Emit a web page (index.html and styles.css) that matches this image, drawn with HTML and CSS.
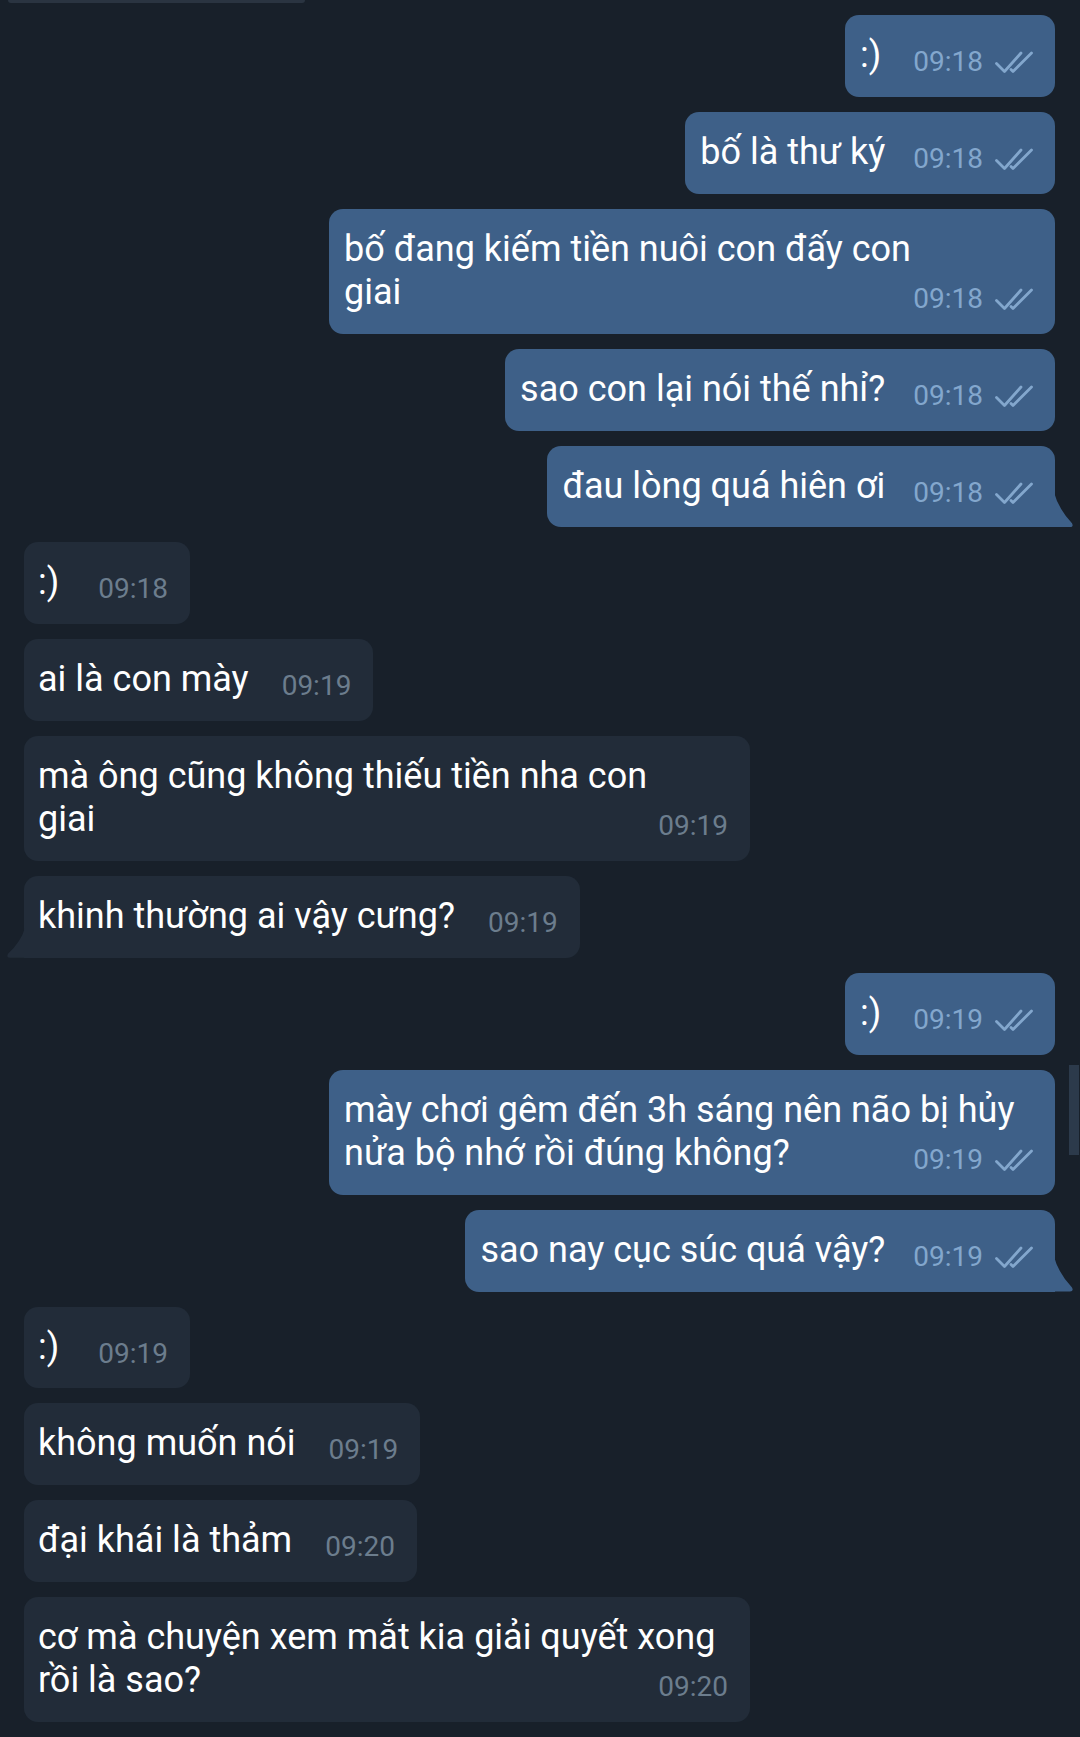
FILE: index.html
```html
<!DOCTYPE html>
<html lang="vi">
<head>
<meta charset="utf-8">
<title>Chat</title>
<link rel="stylesheet" href="styles.css">
</head>
<body>
<div class="chat">
  <div class="prev-edge"></div>

  <div class="row out"><div class="bubble"><span class="text smile">:)</span><span class="meta"><span class="time">09:18</span><svg class="checks" viewBox="0 0 38 24"><path d="M1.5 13.5 L9.5 21.5 L26 3"/><path d="M16 19.5 L18 21.5 L36.5 3"/></svg></span></div></div>
  <div class="row out"><div class="bubble"><span class="text">bố là thư ký</span><span class="meta"><span class="time">09:18</span><svg class="checks" viewBox="0 0 38 24"><path d="M1.5 13.5 L9.5 21.5 L26 3"/><path d="M16 19.5 L18 21.5 L36.5 3"/></svg></span></div></div>
  <div class="row out"><div class="bubble wide"><span class="text">bố đang kiếm tiền nuôi con đấy con<br>giai</span><span class="meta"><span class="time">09:18</span><svg class="checks" viewBox="0 0 38 24"><path d="M1.5 13.5 L9.5 21.5 L26 3"/><path d="M16 19.5 L18 21.5 L36.5 3"/></svg></span></div></div>
  <div class="row out"><div class="bubble"><span class="text">sao con lại nói thế nhỉ?</span><span class="meta"><span class="time">09:18</span><svg class="checks" viewBox="0 0 38 24"><path d="M1.5 13.5 L9.5 21.5 L26 3"/><path d="M16 19.5 L18 21.5 L36.5 3"/></svg></span></div></div>
  <div class="row out"><div class="bubble tail"><span class="text">đau lòng quá hiên ơi</span><span class="meta"><span class="time">09:18</span><svg class="checks" viewBox="0 0 38 24"><path d="M1.5 13.5 L9.5 21.5 L26 3"/><path d="M16 19.5 L18 21.5 L36.5 3"/></svg></span></div></div>

  <div class="row in"><div class="bubble"><span class="text smile">:)</span><span class="meta"><span class="time">09:18</span></span></div></div>
  <div class="row in"><div class="bubble"><span class="text">ai là con mày</span><span class="meta"><span class="time">09:19</span></span></div></div>
  <div class="row in"><div class="bubble wide"><span class="text">mà ông cũng không thiếu tiền nha con<br>giai</span><span class="meta"><span class="time">09:19</span></span></div></div>
  <div class="row in"><div class="bubble tail"><span class="text">khinh thường ai vậy cưng?</span><span class="meta"><span class="time">09:19</span></span></div></div>

  <div class="row out"><div class="bubble"><span class="text smile">:)</span><span class="meta"><span class="time">09:19</span><svg class="checks" viewBox="0 0 38 24"><path d="M1.5 13.5 L9.5 21.5 L26 3"/><path d="M16 19.5 L18 21.5 L36.5 3"/></svg></span></div></div>
  <div class="row out"><div class="bubble wide"><span class="text">mày chơi gêm đến 3h sáng nên não bị hủy<br>nửa bộ nhớ rồi đúng không?</span><span class="meta"><span class="time">09:19</span><svg class="checks" viewBox="0 0 38 24"><path d="M1.5 13.5 L9.5 21.5 L26 3"/><path d="M16 19.5 L18 21.5 L36.5 3"/></svg></span></div></div>
  <div class="row out"><div class="bubble tail"><span class="text">sao nay cục súc quá vậy?</span><span class="meta"><span class="time">09:19</span><svg class="checks" viewBox="0 0 38 24"><path d="M1.5 13.5 L9.5 21.5 L26 3"/><path d="M16 19.5 L18 21.5 L36.5 3"/></svg></span></div></div>

  <div class="row in"><div class="bubble"><span class="text smile">:)</span><span class="meta"><span class="time">09:19</span></span></div></div>
  <div class="row in"><div class="bubble"><span class="text">không muốn nói</span><span class="meta"><span class="time">09:19</span></span></div></div>
  <div class="row in"><div class="bubble"><span class="text">đại khái là thảm</span><span class="meta"><span class="time">09:20</span></span></div></div>
  <div class="row in"><div class="bubble wide"><span class="text">cơ mà chuyện xem mắt kia giải quyết xong<br>rồi là sao?</span><span class="meta"><span class="time">09:20</span></span></div></div>
</div>
<div class="scrollbar"></div>
</body>
</html>
```

FILE: styles.css
```css
html, body {
  margin: 0;
  padding: 0;
  background: #18202a;
}

body {
  position: relative;
  width: 1080px;
  height: 1737px;
  overflow: hidden;
  font-family: "Roboto", "Noto Sans", "Liberation Sans", sans-serif;
  color: #ffffff;
}

.chat {
  display: flex;
  flex-direction: column;
  gap: 15px;
  padding: 0 25px 0 24px;
}

.prev-edge {
  width: 297px;
  height: 3px;
  margin-left: -16px;
  margin-bottom: -3px;
  background: #2a3441;
  border-radius: 0 0 3px 3px;
}

.row {
  display: flex;
}

.row.out {
  justify-content: flex-end;
}

.row.in {
  justify-content: flex-start;
}

.bubble {
  position: relative;
  display: flow-root;
  max-width: 726px;
  border-radius: 14px;
  padding: 19px 22px 19.25px 15px;
  font-size: 36px;
  line-height: 43.5px;
}

.bubble.wide {
  width: 726px;
  box-sizing: border-box;
}

.out .bubble {
  background: #3e6088;
}

.in .bubble {
  background: #222c39;
  padding-left: 14px;
}

.text {
  white-space: nowrap;
}

.out .smile {
  padding-right: 4px;
}

.in .smile {
  padding-right: 6px;
}

.meta {
  float: right;
  display: flex;
  align-items: flex-end;
  margin-top: 14px;
  margin-left: 28px;
  line-height: 28px;
}

.in .meta {
  margin-left: 33px;
}

.time {
  font-size: 28px;
  line-height: 28px;
}

.out .time {
  color: #83a7cd;
}

.in .time {
  color: #6c7d8d;
}

.checks {
  width: 38px;
  height: 24px;
  margin-left: 12px;
  margin-bottom: 2px;
  fill: none;
  stroke: #83a7cd;
  stroke-width: 2.8;
  stroke-linecap: round;
  stroke-linejoin: round;
}

.out .bubble.tail {
  border-bottom-right-radius: 0;
}

.out .bubble.tail::after {
  content: "";
  position: absolute;
  right: -19px;
  bottom: 0;
  width: 20px;
  height: 35px;
  background: #3e6088;
  clip-path: path("M0 0 Q 4 16 18 31 Q 20 35 16 35 L0 35 Z");
}

.in .bubble.tail {
  border-bottom-left-radius: 0;
}

.in .bubble.tail::after {
  content: "";
  position: absolute;
  left: -18px;
  bottom: 0;
  width: 19px;
  height: 30px;
  background: #222c39;
  clip-path: path("M19 0 Q 15 14 2 26 Q 0 30 4 30 L19 30 Z");
}

.scrollbar {
  position: absolute;
  left: 1069px;
  top: 1065px;
  width: 10px;
  height: 90px;
  background: #2c3a4b;
}
```
